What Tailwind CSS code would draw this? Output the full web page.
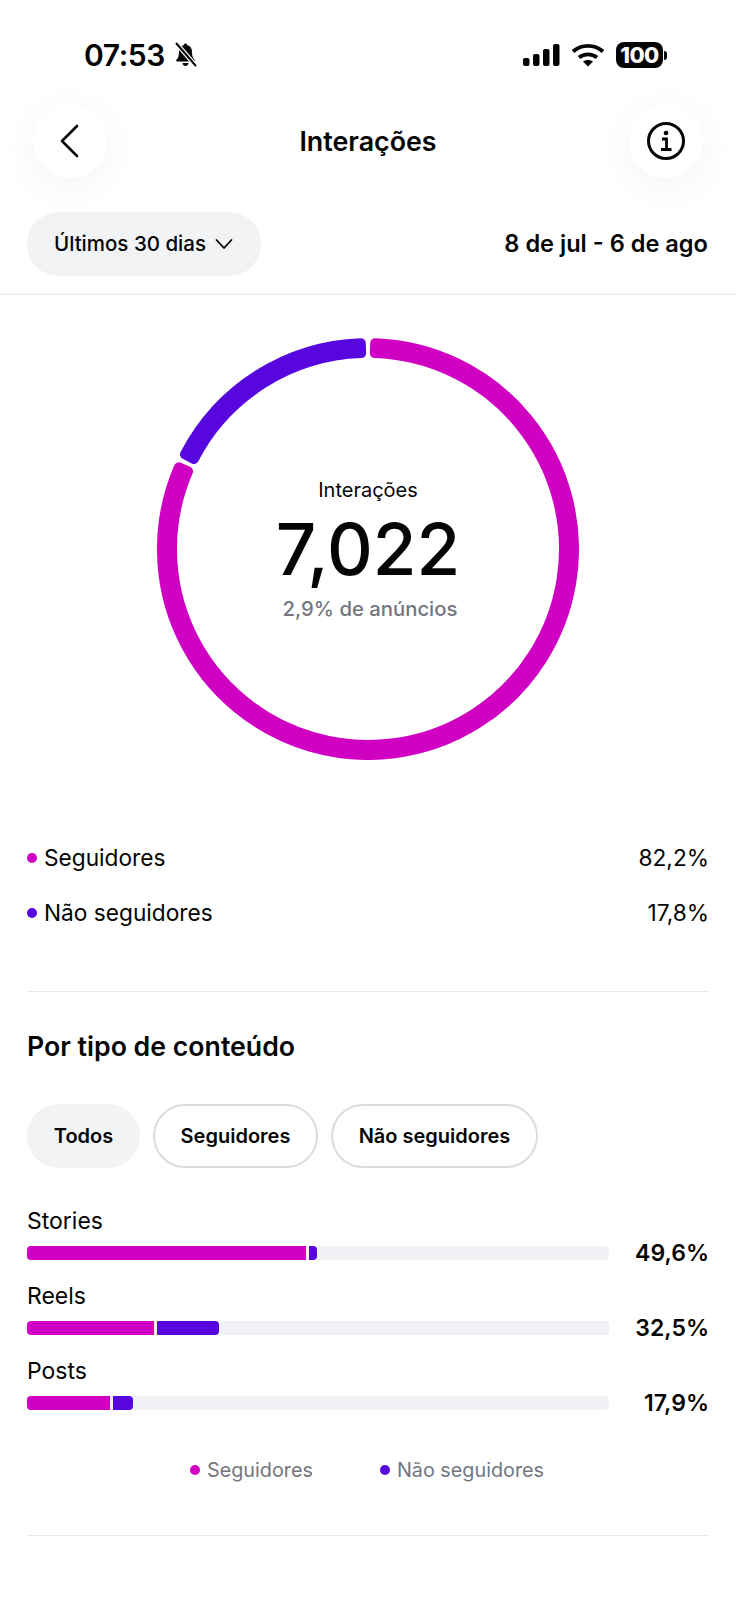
<!DOCTYPE html>
<html lang="pt">
<head>
    <meta charset="UTF-8">
    <meta name="viewport" content="width=device-width, initial-scale=1.0">
    <title>Interações</title>
    <script src="https://cdn.jsdelivr.net/npm/@tailwindcss/browser@4"></script>
</head>
<body class="bg-white font-['Inter',sans-serif] text-[#050505]">
<div class="w-[736px] h-[1600px] overflow-hidden">

    <!-- Status bar -->
    <div class="h-[104px] pt-[36px] pl-[84px] pr-[69px] flex justify-between items-start">
        <div class="flex items-center h-[38px] gap-[8px]">
            <span class="text-[30px] font-semibold leading-none tracking-[-0.4px]">07:53</span>
            <svg class="w-[25px] h-[26px]" viewBox="0 0 24 26" fill="#050505">
                <path d="M12 1.500c1 0 1.600.7 1.700 1.600 3.200.8 4.800 3.400 4.800 6.900 0 4 .8 6 2.600 7.800.6.7.2 1.700-.8 1.700H3.700c-1 0-1.400-1-.8-1.700C4.700 16 5.500 14 5.500 10c0-3.500 1.600-6.100 4.800-6.900.1-.9.700-1.600 1.700-1.600z"/>
                <path d="M9 21h6c-.2 1.800-1.400 3-3 3s-2.800-1.200-3-3z"/>
                <path d="M3 1.500l19 22" stroke="#fff" stroke-width="4.500" fill="none"/>
                <path d="M3 1.500l19 22" stroke="#050505" stroke-width="2" stroke-linecap="round" fill="none"/>
            </svg>
        </div>
        <div class="flex items-center h-[38px] gap-[11px]">
            <svg class="w-[38px] h-[24px]" viewBox="0 0 38 24" fill="#050505">
                <rect x="1" y="15" width="6.500" height="8" rx="2"/>
                <rect x="11" y="11" width="6.500" height="12" rx="2"/>
                <rect x="21" y="6" width="6.500" height="17" rx="2"/>
                <rect x="31" y="1" width="6.500" height="22" rx="2"/>
            </svg>
            <svg class="w-[34px] h-[24px]" viewBox="0 0 34 24" fill="none" stroke="#050505" stroke-width="3.800">
                <path d="M2 8.500c8.500-7.500 21.500-7.500 30 0"/>
                <path d="M8 14.500c5.200-4.300 12.800-4.300 18 0"/>
                <path d="M17 23.500l-5-5c2.900-2 7.100-2 10 0z" fill="#050505" stroke="none"/>
            </svg>
            <div class="flex items-center">
                <div class="w-[47px] h-[26px] bg-[#050505] rounded-[8px] text-white text-[22px] font-extrabold leading-[26px] text-center tracking-[-0.5px]">100</div>
                <div class="w-[3px] h-[9px] bg-[#050505] rounded-r-full ml-[1px]"></div>
            </div>
        </div>
    </div>

    <!-- Header -->
    <div class="relative flex items-center justify-between h-[74px] px-[33px]">
        <button class="w-[74px] h-[74px] rounded-full bg-white shadow-[0_8px_40px_rgba(0,0,0,0.05)] flex items-center justify-center">
            <svg class="w-[24px] h-[36px]" viewBox="0 0 24 36" fill="none" stroke="#050505" stroke-width="2.600" stroke-linecap="round" stroke-linejoin="round">
                <path d="M19 3 4 18l15 15"/>
            </svg>
        </button>
        <h1 class="text-[26.800px] font-semibold">Interações</h1>
        <button class="w-[74px] h-[74px] rounded-full bg-white shadow-[0_8px_40px_rgba(0,0,0,0.05)] flex items-center justify-center">
            <svg class="w-[38px] h-[38px]" viewBox="0 0 38 38" fill="none" stroke="#050505" stroke-width="3">
                <circle cx="19" cy="19" r="17.500"/>
                <circle cx="19" cy="11" r="2.300" fill="#050505" stroke="none"/>
                <path d="M15 17h4.500v10M14 27.500h10.500" stroke-width="2.800"/>
            </svg>
        </button>
    </div>

    <!-- Period -->
    <div class="flex items-center justify-between mt-[34px] pl-[27px] pr-[28px]">
        <button class="w-[234px] h-[64px] rounded-full bg-[#f2f3f5] flex items-center pl-[27px] gap-[9px]">
            <span class="text-[20.500px] font-medium whitespace-nowrap">Últimos 30 dias</span>
            <svg class="w-[18px] h-[12px]" viewBox="0 0 18 12" fill="none" stroke="#050505" stroke-width="1.800" stroke-linecap="round" stroke-linejoin="round">
                <path d="M1.500 2 9 10l7.500-8"/>
            </svg>
        </button>
        <span class="text-[23.600px] font-semibold">8 de jul - 6 de ago</span>
    </div>
    <div class="h-[2px] bg-[#f0f0f1] mt-[17px]"></div>

    <!-- Donut -->
    <div class="relative w-[422px] h-[422px] mx-auto mt-[43px]">
        <svg class="w-[422px] h-[422px]" viewBox="0 0 422 422" stroke-width="10" stroke-linejoin="round">
            <path fill="#d000c2" stroke="#d000c2" d="M218.19 5.13A206 206 0 1 1 21.89 129.29L31.07 133.26A196 196 0 1 0 217.84 15.12Z"/>
            <path fill="#5806de" stroke="#5806de" d="M203.81 5.13A206 206 0 0 0 27.99 116.42L36.88 121.01A196 196 0 0 1 204.16 15.12Z"/>
        </svg>
        <div class="absolute inset-0 flex flex-col items-center pt-[139px]">
            <span class="text-[20px] leading-[26px]">Interações</span>
            <span class="text-[71px] font-medium leading-[78px] mt-[7px]">7,022</span>
            <span class="text-[20.300px] font-medium text-[#737680] leading-[26px] mt-[8px] ml-[4px]">2,9% de anúncios</span>
        </div>
    </div>

    <!-- Followers split -->
    <div class="mt-[84px] px-[27px] flex flex-col gap-[27px] text-[22.700px]">
        <div class="flex items-center justify-between h-[28px]">
            <div class="flex items-center gap-[7px]"><span class="w-[10px] h-[10px] rounded-full bg-[#d000c2]"></span>Seguidores</div>
            <span>82,2%</span>
        </div>
        <div class="flex items-center justify-between h-[28px]">
            <div class="flex items-center gap-[7px]"><span class="w-[10px] h-[10px] rounded-full bg-[#5806de]"></span>Não seguidores</div>
            <span>17,8%</span>
        </div>
    </div>
    <div class="h-[1px] bg-[#e9e9eb] mx-[27px] mt-[64px]"></div>

    <!-- By content type -->
    <h2 class="text-[26.700px] font-semibold leading-[32px] mx-[27px] mt-[38px]">Por tipo de conteúdo</h2>
    <div class="flex gap-[13px] mx-[27px] mt-[42px] text-[20px] font-semibold">
        <div class="w-[113px] h-[64px] rounded-full bg-[#f2f3f5] flex items-center justify-center">Todos</div>
        <div class="w-[165px] h-[64px] rounded-full border-2 border-[#dcdcde] flex items-center justify-center">Seguidores</div>
        <div class="w-[207px] h-[64px] rounded-full border-2 border-[#dcdcde] flex items-center justify-center">Não seguidores</div>
    </div>

    <div class="mx-[27px] mt-[39px] flex flex-col gap-[15px]">
        <div>
            <div class="text-[23px] leading-[28px]">Stories</div>
            <div class="flex items-center justify-between mt-[4px] h-[28px]">
                <div class="w-[582px] h-[14px] bg-[#eff1f5] rounded-[4px] flex overflow-hidden">
                    <div class="w-[279px] bg-[#d000c2]"></div>
                    <div class="w-[8px] ml-[3px] bg-[#5806de] rounded-r-[4px]"></div>
                </div>
                <span class="text-[23px] font-semibold">49,6%</span>
            </div>
        </div>
        <div>
            <div class="text-[23px] leading-[28px]">Reels</div>
            <div class="flex items-center justify-between mt-[4px] h-[28px]">
                <div class="w-[582px] h-[14px] bg-[#eff1f5] rounded-[4px] flex overflow-hidden">
                    <div class="w-[127px] bg-[#d000c2]"></div>
                    <div class="w-[62px] ml-[3px] bg-[#5806de] rounded-r-[4px]"></div>
                </div>
                <span class="text-[23px] font-semibold">32,5%</span>
            </div>
        </div>
        <div>
            <div class="text-[23px] leading-[28px]">Posts</div>
            <div class="flex items-center justify-between mt-[4px] h-[28px]">
                <div class="w-[582px] h-[14px] bg-[#eff1f5] rounded-[4px] flex overflow-hidden">
                    <div class="w-[83px] bg-[#d000c2]"></div>
                    <div class="w-[20px] ml-[3px] bg-[#5806de] rounded-r-[4px]"></div>
                </div>
                <span class="text-[23px] font-semibold">17,9%</span>
            </div>
        </div>
    </div>

    <!-- Legend -->
    <div class="flex mt-[39px] pl-[190px] gap-[67px] text-[19.800px] text-[#737680] leading-[28px]">
        <div class="flex items-center gap-[7px]"><span class="w-[10px] h-[10px] rounded-full bg-[#d000c2]"></span>Seguidores</div>
        <div class="flex items-center gap-[7px]"><span class="w-[10px] h-[10px] rounded-full bg-[#5806de]"></span>Não seguidores</div>
    </div>
    <div class="h-[1px] bg-[#e9e9eb] mx-[27px] mt-[51px]"></div>
</div>
</body>
</html>
